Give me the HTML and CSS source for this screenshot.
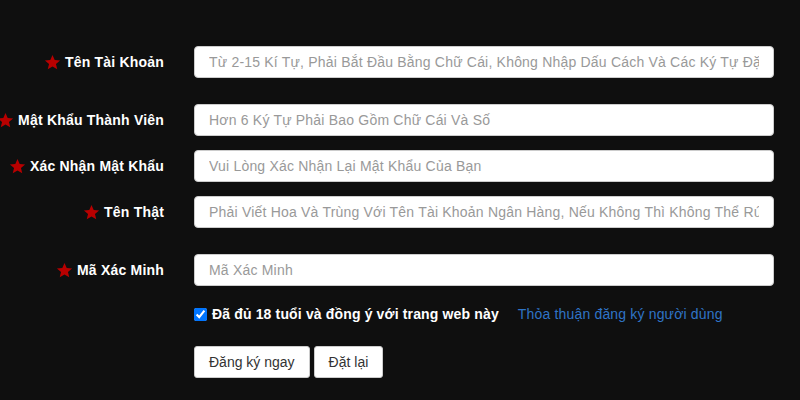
FILE: index.html
```html
<!DOCTYPE html>
<html lang="vi">
<head>
<meta charset="utf-8">
<title>Đăng ký</title>
<link rel="stylesheet" href="styles.css">
</head>
<body>
<form class="form">
  <div class="row first">
    <label class="label"><svg class="star" viewBox="0 0 24 24"><path d="M12 1.5l3.1 7 7.6.7-5.8 5 1.8 7.5L12 17.7l-6.7 4 1.8-7.5-5.8-5 7.6-.7z"/></svg>Tên Tài Khoản</label>
    <input class="field" type="text" placeholder="Từ 2-15 Kí Tự, Phải Bắt Đầu Bằng Chữ Cái, Không Nhập Dấu Cách Và Các Ký Tự Đặc Biệt">
  </div>
  <div class="row wide">
    <label class="label"><svg class="star" viewBox="0 0 24 24"><path d="M12 1.5l3.1 7 7.6.7-5.8 5 1.8 7.5L12 17.7l-6.7 4 1.8-7.5-5.8-5 7.6-.7z"/></svg>Mật Khẩu Thành Viên</label>
    <input class="field" type="password" placeholder="Hơn 6 Ký Tự Phải Bao Gồm Chữ Cái Và Số">
  </div>
  <div class="row">
    <label class="label"><svg class="star" viewBox="0 0 24 24"><path d="M12 1.5l3.1 7 7.6.7-5.8 5 1.8 7.5L12 17.7l-6.7 4 1.8-7.5-5.8-5 7.6-.7z"/></svg>Xác Nhận Mật Khẩu</label>
    <input class="field" type="password" placeholder="Vui Lòng Xác Nhận Lại Mật Khẩu Của Bạn">
  </div>
  <div class="row">
    <label class="label"><svg class="star" viewBox="0 0 24 24"><path d="M12 1.5l3.1 7 7.6.7-5.8 5 1.8 7.5L12 17.7l-6.7 4 1.8-7.5-5.8-5 7.6-.7z"/></svg>Tên Thật</label>
    <input class="field" type="text" placeholder="Phải Viết Hoa Và Trùng Với Tên Tài Khoản Ngân Hàng, Nếu Không Thì Không Thể Rút Tiền">
  </div>
  <div class="row wide">
    <label class="label"><svg class="star" viewBox="0 0 24 24"><path d="M12 1.5l3.1 7 7.6.7-5.8 5 1.8 7.5L12 17.7l-6.7 4 1.8-7.5-5.8-5 7.6-.7z"/></svg>Mã Xác Minh</label>
    <input class="field" type="text" placeholder="Mã Xác Minh">
  </div>
  <div class="agree">
    <input class="check" type="checkbox" checked>
    <span class="agree-text">Đã đủ 18 tuổi và đồng ý với trang web này</span>
    <a class="link" href="#">Thỏa thuận đăng ký người dùng</a>
  </div>
  <div class="actions">
    <button class="btn" type="button">Đăng ký ngay</button>
    <button class="btn" type="button">Đặt lại</button>
  </div>
</form>
</body>
</html>
```
FILE: styles.css
```css
html, body {
  margin: 0;
  padding: 0;
  background: #0f0f0f;
  font-family: "Liberation Sans", Arial, sans-serif;
  font-size: 14px;
}
.form {
  display: flex;
  flex-direction: column;
  padding-top: 46px;
}
.row {
  display: flex;
  align-items: center;
  margin-top: 14px;
}
.row.first { margin-top: 0; }
.row.wide { margin-top: 26px; }
.label {
  width: 164px;
  display: flex;
  justify-content: flex-end;
  align-items: center;
  color: #fff;
  font-weight: bold;
  font-size: 14px;
  letter-spacing: 0.2px;
  white-space: nowrap;
}
.star {
  width: 17px;
  height: 17px;
  fill: #b80000;
  margin-right: 4px;
  flex: none;
}
.field {
  box-sizing: border-box;
  margin: 0 0 0 30px;
  width: 580px;
  height: 32px;
  padding: 0 14px;
  border: 1px solid #ccc;
  border-radius: 4px;
  background: #fff;
  font-family: "Liberation Sans", Arial, sans-serif;
  font-size: 14px;
  letter-spacing: 0.2px;
  color: #333;
  outline: none;
}
.field::placeholder { color: #999; }
.agree {
  display: flex;
  align-items: center;
  margin: 18px 0 0 194px;
  height: 20px;
}
.check {
  width: 13px;
  height: 13px;
  margin: 0 5px 0 0;
  accent-color: #0075ff;
}
.agree-text {
  color: #fff;
  font-weight: bold;
  letter-spacing: 0.15px;
}
.link {
  margin-left: 19px;
  color: #2f74c6;
  letter-spacing: 0.17px;
  text-decoration: none;
}
.actions {
  display: flex;
  gap: 4px;
  margin: 22px 0 0 194px;
}
.btn {
  box-sizing: border-box;
  height: 32px;
  padding: 0 14px;
  background: #fff;
  border: 1px solid #ccc;
  border-radius: 3px;
  color: #333;
  font-family: "Liberation Sans", Arial, sans-serif;
  font-size: 14px;
}
```
